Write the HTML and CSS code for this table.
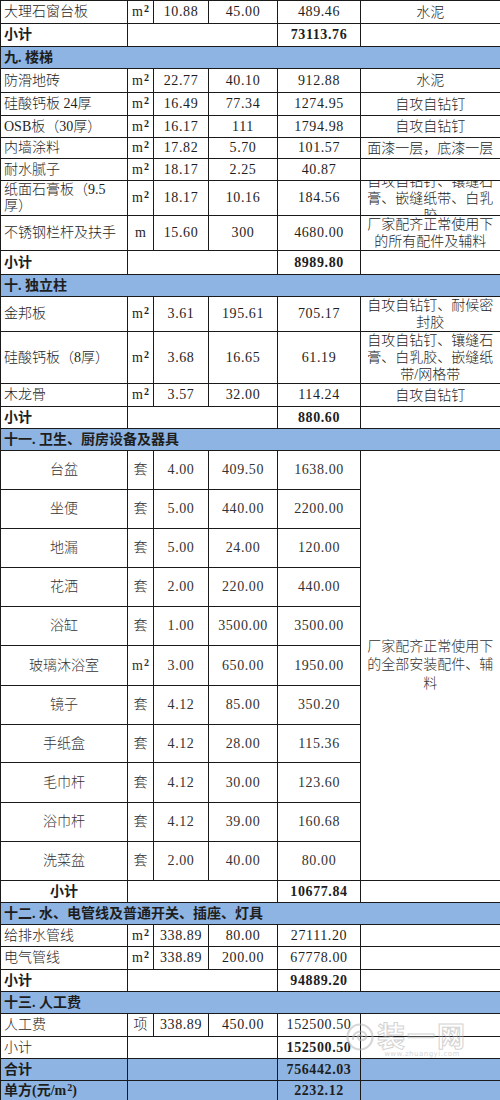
FILE: index.html
```html
<!DOCTYPE html>
<html lang="zh-CN">
<head>
<meta charset="utf-8">
<title>装修预算表</title>
<link rel="stylesheet" href="styles.css">
</head>
<body>
<table class="sheet">
  <colgroup>
    <col class="c1"><col class="c2"><col class="c3"><col class="c4"><col class="c5"><col class="c6">
  </colgroup>
  <tbody>
    <tr class="h23"><td class="name">大理石窗台板</td><td>m<span class="sq">2</span></td><td class="num">10.88</td><td class="num">45.00</td><td class="num">489.46</td><td class="note">水泥</td></tr>
    <tr class="h23"><td class="name b">小计</td><td colspan="3"></td><td class="num b">73113.76</td><td></td></tr>
    <tr class="h22 sec"><td colspan="6" class="name b">九. 楼梯</td></tr>
    <tr class="h24"><td class="name">防滑地砖</td><td>m<span class="sq">2</span></td><td class="num">22.77</td><td class="num">40.10</td><td class="num">912.88</td><td class="note">水泥</td></tr>
    <tr class="h23"><td class="name">硅酸钙板 24厚</td><td>m<span class="sq">2</span></td><td class="num">16.49</td><td class="num">77.34</td><td class="num">1274.95</td><td class="note">自攻自钻钉</td></tr>
    <tr class="h22"><td class="name">OSB板（30厚）</td><td>m<span class="sq">2</span></td><td class="num">16.17</td><td class="num">111</td><td class="num">1794.98</td><td class="note">自攻自钻钉</td></tr>
    <tr class="h21"><td class="name">内墙涂料</td><td>m<span class="sq">2</span></td><td class="num">17.82</td><td class="num">5.70</td><td class="num">101.57</td><td class="note">面漆一层，底漆一层</td></tr>
    <tr class="h22"><td class="name">耐水腻子</td><td>m<span class="sq">2</span></td><td class="num">18.17</td><td class="num">2.25</td><td class="num">40.87</td><td class="note"></td></tr>
    <tr class="h35"><td class="name wrap">纸面石膏板（9.5<br>厚）</td><td>m<span class="sq">2</span></td><td class="num">18.17</td><td class="num">10.16</td><td class="num">184.56</td><td class="note"><div class="clip"><span>自攻自钻钉、镶缝石膏、嵌缝纸带、白乳胶</span></div></td></tr>
    <tr class="h33"><td class="name">不锈钢栏杆及扶手</td><td>m</td><td class="num">15.60</td><td class="num">300</td><td class="num">4680.00</td><td class="note">厂家配齐正常使用下的所有配件及辅料</td></tr>
    <tr class="h24"><td class="name b">小计</td><td colspan="3"></td><td class="num b">8989.80</td><td></td></tr>
    <tr class="h22 sec"><td colspan="6" class="name b">十. 独立柱</td></tr>
    <tr class="h34"><td class="name">金邦板</td><td>m<span class="sq">2</span></td><td class="num">3.61</td><td class="num">195.61</td><td class="num">705.17</td><td class="note">自攻自钻钉、耐候密封胶</td></tr>
    <tr class="h52"><td class="name">硅酸钙板（8厚）</td><td>m<span class="sq">2</span></td><td class="num">3.68</td><td class="num">16.65</td><td class="num">61.19</td><td class="note">自攻自钻钉、镶缝石膏、白乳胶、嵌缝纸带/网格带</td></tr>
    <tr class="h23"><td class="name">木龙骨</td><td>m<span class="sq">2</span></td><td class="num">3.57</td><td class="num">32.00</td><td class="num">114.24</td><td class="note">自攻自钻钉</td></tr>
    <tr class="h22"><td class="name b">小计</td><td colspan="3"></td><td class="num b">880.60</td><td></td></tr>
    <tr class="h22 sec"><td colspan="6" class="name b">十一. 卫生、厨房设备及器具</td></tr>
    <tr class="h39 soft"><td>台盆</td><td>套</td><td class="num">4.00</td><td class="num">409.50</td><td class="num">1638.00</td><td class="note tall" rowspan="11">厂家配齐正常使用下的全部安装配件、辅料</td></tr>
    <tr class="h39 soft"><td>坐便</td><td>套</td><td class="num">5.00</td><td class="num">440.00</td><td class="num">2200.00</td></tr>
    <tr class="h39 soft"><td>地漏</td><td>套</td><td class="num">5.00</td><td class="num">24.00</td><td class="num">120.00</td></tr>
    <tr class="h39 soft"><td>花洒</td><td>套</td><td class="num">2.00</td><td class="num">220.00</td><td class="num">440.00</td></tr>
    <tr class="h39 soft"><td>浴缸</td><td>套</td><td class="num">1.00</td><td class="num">3500.00</td><td class="num">3500.00</td></tr>
    <tr class="h40 soft"><td>玻璃沐浴室</td><td>m<span class="sq">2</span></td><td class="num">3.00</td><td class="num">650.00</td><td class="num">1950.00</td></tr>
    <tr class="h39 soft"><td>镜子</td><td>套</td><td class="num">4.12</td><td class="num">85.00</td><td class="num">350.20</td></tr>
    <tr class="h38 soft"><td>手纸盒</td><td>套</td><td class="num">4.12</td><td class="num">28.00</td><td class="num">115.36</td></tr>
    <tr class="h40 soft"><td>毛巾杆</td><td>套</td><td class="num">4.12</td><td class="num">30.00</td><td class="num">123.60</td></tr>
    <tr class="h39 soft"><td>浴巾杆</td><td>套</td><td class="num">4.12</td><td class="num">39.00</td><td class="num">160.68</td></tr>
    <tr class="h39 soft"><td>洗菜盆</td><td>套</td><td class="num">2.00</td><td class="num">40.00</td><td class="num">80.00</td></tr>
    <tr class="h22"><td class="b">小计</td><td colspan="3"></td><td class="num b">10677.84</td><td></td></tr>
    <tr class="h22 sec"><td colspan="6" class="name b">十二. 水、电管线及普通开关、插座、灯具</td></tr>
    <tr class="h22"><td class="name">给排水管线</td><td>m<span class="sq">2</span></td><td class="num">338.89</td><td class="num">80.00</td><td class="num">27111.20</td><td></td></tr>
    <tr class="h23"><td class="name">电气管线</td><td>m<span class="sq">2</span></td><td class="num">338.89</td><td class="num">200.00</td><td class="num">67778.00</td><td></td></tr>
    <tr class="h22"><td class="name b">小计</td><td colspan="3"></td><td class="num b">94889.20</td><td></td></tr>
    <tr class="h22 sec"><td colspan="6" class="name b">十三. 人工费</td></tr>
    <tr class="h23"><td class="name">人工费</td><td>项</td><td class="num">338.89</td><td class="num">450.00</td><td class="num">152500.50</td><td></td></tr>
    <tr class="h22"><td class="name">小计</td><td colspan="3"></td><td class="num b">152500.50</td><td></td></tr>
    <tr class="h22 sec"><td class="name b">合计</td><td colspan="3"></td><td class="num b">756442.03</td><td></td></tr>
    <tr class="h21 sec"><td class="name b">单方(元/m<span class="sq">2</span>)</td><td colspan="3"></td><td class="num b">2232.12</td><td></td></tr>
  </tbody>
</table>
<div class="wm">
  <svg class="wm-logo" width="30" height="30" viewBox="0 0 30 30">
    <circle cx="15" cy="15" r="12.5" fill="none" stroke="#b8b8b8" stroke-width="2.2"/>
    <path d="M8 17 C8 9 19 7 21 13 C22.5 18 15 20 13 16 C12 13.5 15 12 17 14" fill="none" stroke="#b8b8b8" stroke-width="2.2" stroke-linecap="round"/>
  </svg>
  <div class="wm-text">
    <span class="wm-name">装一网</span>
    <span class="wm-url">www.zhuangyi.com</span>
  </div>
</div>
</body>
</html>
```
FILE: styles.css
```css
html, body {
  margin: 0;
  padding: 0;
  background: #ffffff;
}
body {
  position: relative;
  width: 500px;
  height: 1100px;
  overflow: hidden;
}
.sheet {
  border-collapse: collapse;
  table-layout: fixed;
  width: 500px;
  font-family: "Liberation Serif", "Noto Sans CJK SC", serif;
  font-size: 14px;
  font-weight: 300;
  color: #1e1e1e;
  border-right: 2px solid #111;
  border-bottom: 2px solid #111;
}
.c1 { width: 127px; }
.c2 { width: 26px; }
.c3 { width: 55px; }
.c4 { width: 69px; }
.c5 { width: 83px; }
.c6 { width: 140px; }

.sheet td {
  border: 1px solid #1a1a1a;
  padding: 0 3px;
  line-height: 16px;
  text-align: center;
  vertical-align: middle;
  white-space: nowrap;
  overflow: hidden;
}
.sheet td.name { text-align: left; }
.sheet td.wrap { white-space: normal; line-height: 16px; }
.sheet td.num { letter-spacing: 0.6px; padding: 0 1px; }
.sheet td.note {
  white-space: normal;
  line-height: 17px;
  padding: 0 3px;
  color: #252525;
}
.sheet td.tall {
  line-height: 18.5px;
  color: #333;
}
.sheet td.b, .b { font-weight: bold; }
.sheet .soft td { color: #333; }

.sq {
  font-size: 10px;
  font-weight: bold;
  vertical-align: 4px;
  line-height: 0;
  margin-left: 1px;
}

.sec td { background: #8db4e2; }

.clip {
  height: 34px;
  overflow: hidden;
  display: flex;
  flex-direction: column;
  justify-content: center;
}

.h21 { height: 21px; }
.h22 { height: 22px; }
.h23 { height: 23px; }
.h24 { height: 24px; }
.h33 { height: 33px; }
.h34 { height: 34px; }
.h35 { height: 35px; }
.h38 { height: 38px; }
.h39 { height: 39px; }
.h40 { height: 40px; }
.h52 { height: 52px; }

.wm {
  position: absolute;
  left: 345px;
  top: 1021px;
  display: flex;
  align-items: flex-start;
  gap: 2px;
  opacity: 0.55;
  pointer-events: none;
}
.wm-logo { margin-top: 1px; }
.wm-text {
  display: flex;
  flex-direction: column;
  align-items: center;
}
.wm-name {
  font-family: "Noto Sans CJK SC", sans-serif;
  font-size: 28px;
  line-height: 29px;
  letter-spacing: 2px;
  font-weight: bold;
  color: rgba(255, 255, 255, 0.4);
  -webkit-text-stroke: 1px #b0b0b0;
}
.wm-url {
  font-family: "DejaVu Sans", sans-serif;
  font-size: 7px;
  line-height: 8px;
  color: #b5b5b5;
  letter-spacing: 0.5px;
}
```
